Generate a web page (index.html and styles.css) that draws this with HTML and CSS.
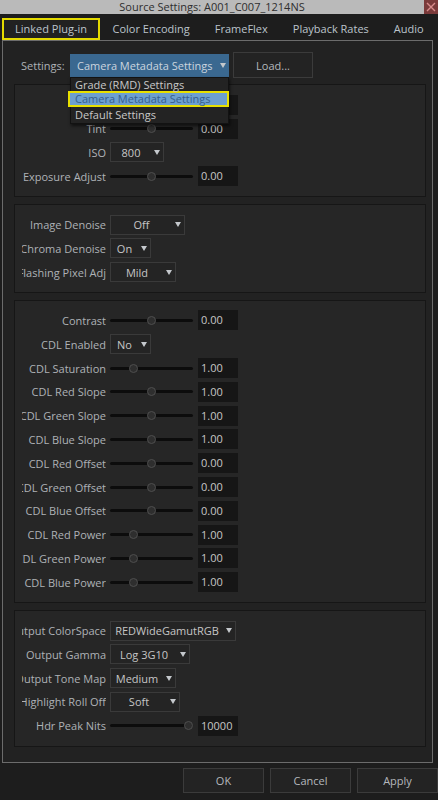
FILE: index.html
```html
<!DOCTYPE html>
<html lang="en">
<head>
  <meta charset="UTF-8">
  <title>Source Settings</title>
  <link rel="stylesheet" href="styles.css">
</head>
<body>
  <div class="titlebar">
    <span class="title">Source Settings: A001_C007_1214NS</span>
    <div class="close">
      <svg width="14" height="14" viewBox="0 0 14 14"><path d="M3 3L11 11M11 3L3 11" stroke="#d88c8c" stroke-width="1.4"/></svg>
    </div>
  </div>

  <div class="tabs">
    <div class="tab active">Linked Plug-in</div>
    <div class="tab">Color Encoding</div>
    <div class="tab">FrameFlex</div>
    <div class="tab">Playback Rates</div>
    <div class="tab">Audio</div>
  </div>

  <div class="panel">
    <div class="settings-row">
      <span class="settings-label">Settings:</span>
      <div class="combo">
        <div class="select-blue"><span>Camera Metadata Settings</span><span class="arrow"></span></div>
        <ul class="menu">
          <li class="first">Grade (RMD) Settings</li>
          <li class="current">Camera Metadata Settings</li>
          <li>Default Settings</li>
        </ul>
      </div>
      <div class="btn load">Load...</div>
    </div>

    <div class="groups">
      <div class="group">
        <!-- first row sits under the open menu -->
        <div class="row"><span class="label"></span><div class="slider"><i style="left:50%"></i></div><div class="field"></div></div>
        <div class="row"><span class="label"><span>Tint</span></span><div class="slider"><i style="left:50%"></i></div><div class="field">0.00</div></div>
        <div class="row"><span class="label"><span>ISO</span></span><div class="dd w54"><span class="val">800</span><span class="arrow"></span></div></div>
        <div class="row"><span class="label"><span>Exposure Adjust</span></span><div class="slider"><i style="left:50%"></i></div><div class="field">0.00</div></div>
      </div>

      <div class="group">
        <div class="row"><span class="label"><span>Image Denoise</span></span><div class="dd w75"><span class="val">Off</span><span class="arrow"></span></div></div>
        <div class="row"><span class="label"><span>Chroma Denoise</span></span><div class="dd w41"><span class="val">On</span><span class="arrow"></span></div></div>
        <div class="row"><span class="label"><span>Flashing Pixel Adj</span></span><div class="dd w66"><span class="val">Mild</span><span class="arrow"></span></div></div>
      </div>

      <div class="group">
        <div class="row"><span class="label"><span>Contrast</span></span><div class="slider"><i style="left:50%"></i></div><div class="field">0.00</div></div>
        <div class="row"><span class="label"><span>CDL Enabled</span></span><div class="dd w41"><span class="val">No</span><span class="arrow"></span></div></div>
        <div class="row"><span class="label"><span>CDL Saturation</span></span><div class="slider"><i style="left:28%"></i></div><div class="field">1.00</div></div>
        <div class="row"><span class="label"><span>CDL Red Slope</span></span><div class="slider"><i style="left:50%"></i></div><div class="field">1.00</div></div>
        <div class="row"><span class="label"><span>CDL Green Slope</span></span><div class="slider"><i style="left:50%"></i></div><div class="field">1.00</div></div>
        <div class="row"><span class="label"><span>CDL Blue Slope</span></span><div class="slider"><i style="left:50%"></i></div><div class="field">1.00</div></div>
        <div class="row"><span class="label"><span>CDL Red Offset</span></span><div class="slider"><i style="left:50%"></i></div><div class="field">0.00</div></div>
        <div class="row"><span class="label"><span>CDL Green Offset</span></span><div class="slider"><i style="left:50%"></i></div><div class="field">0.00</div></div>
        <div class="row"><span class="label"><span>CDL Blue Offset</span></span><div class="slider"><i style="left:50%"></i></div><div class="field">0.00</div></div>
        <div class="row"><span class="label"><span>CDL Red Power</span></span><div class="slider"><i style="left:28%"></i></div><div class="field">1.00</div></div>
        <div class="row"><span class="label"><span>CDL Green Power</span></span><div class="slider"><i style="left:28%"></i></div><div class="field">1.00</div></div>
        <div class="row"><span class="label"><span>CDL Blue Power</span></span><div class="slider"><i style="left:28%"></i></div><div class="field">1.00</div></div>
      </div>

      <div class="group">
        <div class="row"><span class="label"><span>Output ColorSpace</span></span><div class="dd w126"><span class="val">REDWideGamutRGB</span><span class="arrow"></span></div></div>
        <div class="row"><span class="label"><span>Output Gamma</span></span><div class="dd w80"><span class="val">Log 3G10</span><span class="arrow"></span></div></div>
        <div class="row"><span class="label"><span>Output Tone Map</span></span><div class="dd w66"><span class="val">Medium</span><span class="arrow"></span></div></div>
        <div class="row"><span class="label"><span>Highlight Roll Off</span></span><div class="dd w70"><span class="val">Soft</span><span class="arrow"></span></div></div>
        <div class="row"><span class="label"><span>Hdr Peak Nits</span></span><div class="slider"><i style="left:95%"></i></div><div class="field">10000</div></div>
      </div>
    </div>
  </div>

  <div class="footer">
    <div class="btn">OK</div>
    <div class="btn">Cancel</div>
    <div class="btn">Apply</div>
  </div>
</body>
</html>
```

FILE: styles.css
```css
*{margin:0;padding:0;box-sizing:border-box;}
body{width:438px;height:800px;overflow:hidden;background:#1d1d1d;font:11px "Open Sans","Noto Sans",sans-serif;color:#aeb2b6;}

.titlebar{height:14px;display:flex;background:#bababa;color:#2e2e2e;line-height:14px;}
.titlebar .title{flex:1;text-align:center;}
.close{width:14px;height:14px;background:#7a3a3a;}
.close svg{display:block;}

.tabs{display:flex;height:22px;margin-top:4px;padding-left:2px;}
.tab{padding:0 12.5px;line-height:22px;color:#bcc4cc;white-space:nowrap;}
.tab.active{border:2px solid #e4da00;padding:0 11px;line-height:18px;background:#212121;}

.panel{margin-left:2px;width:431px;height:723px;border:1px solid #6c6c6c;background:#222;padding:11px 6px 0 11px;}

.settings-row{display:flex;align-items:center;height:26px;padding-left:7px;margin-bottom:6px;}
.settings-label{width:49px;}
.combo{position:relative;width:159px;height:23px;}
.select-blue{height:23px;display:flex;align-items:center;justify-content:space-between;padding:0 2px 0 7px;background:#3a6890;color:#cbd5df;}
.select-blue .arrow{width:8px;display:flex;justify-content:center;}
.menu{position:absolute;left:0;top:23px;width:159px;list-style:none;background:#232323;border:1px solid #121212;box-shadow:1px 2px 3px rgba(0,0,0,.6);z-index:2;color:#c8c8c8;}
.menu li{height:16px;line-height:15px;padding-left:4px;white-space:nowrap;}
.menu li.first{height:13px;line-height:13px;}
.menu li.current{margin:0 -1px 0 -3px;padding-left:5px;border:2px solid #e8e000;background:#6c9fd0;color:#35608e;line-height:12px;}
.load{margin-left:4px;width:80px;height:26px;}

.btn{display:flex;align-items:center;justify-content:center;border:1px solid #3b3b3b;background:#232323;color:#b4b8bc;}

.groups{display:flex;flex-direction:column;gap:6.5px;}
.group{background:#262626;border:1px solid #161616;padding:8px 0 8px 7px;}
.row{display:flex;align-items:center;height:23.8px;}
.label{width:84px;margin-right:4px;display:flex;justify-content:flex-end;overflow:hidden;white-space:nowrap;}

.slider{position:relative;width:83px;height:10px;margin-right:5px;}
.slider::before{content:'';position:absolute;left:0;right:0;top:3.5px;height:3px;border-radius:2px;background:#0c0c0c;}
.slider i{position:absolute;top:0.5px;width:9px;height:9px;margin-left:-4.5px;border-radius:50%;background:#2e2e2e;border:1px solid #4e4e4e;}

.field{width:40px;height:20px;line-height:20px;padding-left:3px;background:#161616;color:#c6c6c6;}

.dd{height:20px;display:flex;align-items:center;border:1px solid #3a3a3a;background:#242424;color:#c6c6c6;white-space:nowrap;}
.dd .val{flex:1;text-align:center;}
.dd .arrow{width:12px;display:flex;justify-content:center;}
.arrow::after{content:'';border-left:3px solid transparent;border-right:3px solid transparent;border-top:5px solid #c4c8cc;}
.w41{width:41px;}
.w54{width:54px;}
.w66{width:66px;}
.w70{width:70px;}
.w75{width:75px;}
.w80{width:80px;}
.w126{width:126px;}

.footer{display:flex;justify-content:flex-end;gap:6px;padding-top:5px;}
.footer .btn{width:81px;height:25px;}
```
